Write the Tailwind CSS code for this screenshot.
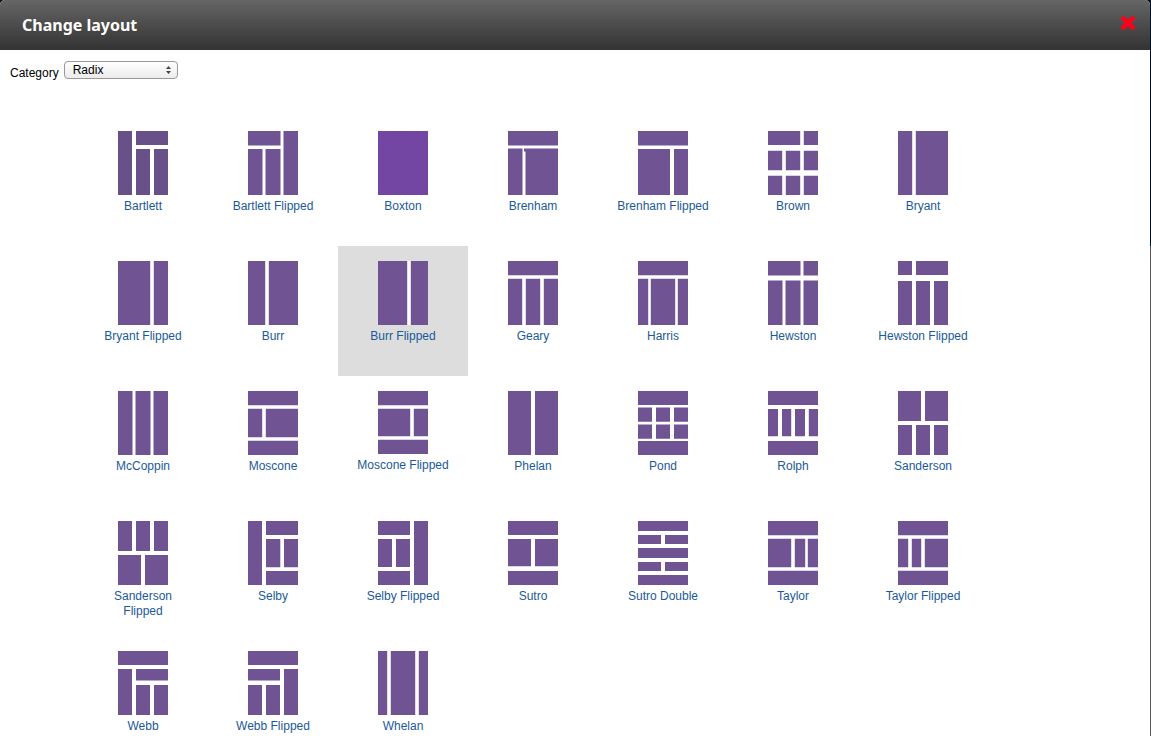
<!DOCTYPE html>
<html lang="en">
<head>
  <meta charset="UTF-8" />
  <meta name="viewport" content="width=device-width, initial-scale=1.0" />
  <title>Change layout</title>
  <script src="https://cdn.jsdelivr.net/npm/@tailwindcss/browser@4"></script>
</head>
<body class="min-h-screen pr-px font-['Liberation_Sans',Arial,sans-serif] text-xs text-black bg-linear-to-b from-[#001026] from-[246px] to-[#555] to-[246px]">
  <main class="min-h-screen rounded-t-[5px] bg-white overflow-hidden">
    <header class="flex items-center justify-between h-[50px] pl-[22px] pr-[14px] bg-linear-to-b from-[#666] to-[#333]">
      <h1 class="font-['Noto_Sans','Open_Sans',sans-serif] text-base leading-5 font-bold text-white">Change layout</h1>
      <button type="button" aria-label="Close" class="pb-1 cursor-pointer">
        <svg class="block w-4 h-4" viewBox="0 0 16 16" fill="#ff0018"><path d="M3.6.4 8 4.8 12.4.4 15.6 3.5 11.2 8l4.4 4.2-3.2 3.2L8 11.1l-4.4 4.3-3.2-3.2L4.8 8 .4 3.5Z"/></svg>
      </button>
    </header>
    <form class="flex items-start gap-[5px] px-[10px] pt-[11px]">
      <label for="category" class="pt-1">Category</label>
      <div class="relative">
        <select id="category" class="block appearance-none w-[114px] h-[18px] pl-2 pr-4 rounded-[4px] border border-[#999] bg-linear-to-b from-white to-[#ececec] text-xs leading-4">
          <option>Radix</option>
        </select>
        <svg class="absolute right-[7px] top-[5px] w-[5px] h-2 pointer-events-none" viewBox="0 0 5 8" fill="#444"><path d="M2.5 0 5 3H0ZM2.5 8 0 5h5Z"/></svg>
      </div>
    </form>
    <div id="layouts" class="flex flex-wrap px-[78px] pt-[35px]"></div>
  </main>
<script>
  // Each region of a layout is [left, top, right, bottom] on a 50 x 64 page.
  const layouts = [
    { name: 'Bartlett', color: '#685088', regions: [[0,0,14,64],[18,0,50,14],[18,18,32,64],[36,18,50,64]] },
    { name: 'Bartlett Flipped', regions: [[0,0,32.5,14.5],[0,18,14.5,64],[17.5,18,32.5,64],[35.5,0,50,64]] },
    { name: 'Boxton', color: '#7446a4', regions: [[0,0,50,64]] },
    { name: 'Brenham', regions: [[0,0,50,14.5],[0,17.5,14.5,64],[17.5,17.5,50,64],[16,17.5,18,20.5]] },
    { name: 'Brenham Flipped', regions: [[0,0,50,14.5],[0,18,32,64],[36,18,50,64]] },
    { name: 'Brown', regions: [[0,0,32.2,14],[35.8,0,50,14],[0,19.8,14.2,39.2],[17.8,19.8,32.2,39.2],[35.8,19.8,50,39.2],[0,44.8,14.2,64],[17.8,44.8,32.2,64],[35.8,44.8,50,64]] },
    { name: 'Bryant', regions: [[0,0,14.2,64],[17.8,0,50,64]] },
    { name: 'Bryant Flipped', regions: [[0,0,32.2,64],[35.8,0,50,64]] },
    { name: 'Burr', regions: [[0,0,17.2,64],[20.8,0,50,64]] },
    { name: 'Burr Flipped', selected: true, regions: [[0,0,29.2,64],[32.8,0,50,64]] },
    { name: 'Geary', regions: [[0,0,50,14.2],[0,17.8,14.2,64],[17.8,17.8,32.2,64],[35.8,17.8,50,64]] },
    { name: 'Harris', regions: [[0,0,50,14.2],[0,17.8,10.2,64],[12.8,17.8,37.2,64],[39.8,17.8,50,64]] },
    { name: 'Hewston', regions: [[0,0,32.5,14.5],[35.5,0,50,14.5],[0,19.5,14.5,64],[17.5,19.5,32.5,64],[35.5,19.5,50,64]] },
    { name: 'Hewston Flipped', regions: [[0,0,14,14],[18,0,50,14],[0,20,14,64],[18,20,32,64],[36,20,50,64]] },
    { name: 'McCoppin', regions: [[0,0,14.5,64],[17.5,0,32.5,64],[35.5,0,50,64]] },
    { name: 'Moscone', regions: [[0,0,50,14.2],[0,17.8,14.2,46.2],[17.8,17.8,50,46.2],[0,49.8,50,64]] },
    { name: 'Moscone Flipped', short: true, regions: [[0,0,50,14.2],[0,17.8,32.2,45.2],[35.8,17.8,50,45.2],[0,48.8,50,63]] },
    { name: 'Phelan', regions: [[0,0,23,64],[27,0,50,64]] },
    { name: 'Pond', regions: [[0,0,50,14],[0,16.5,14,30.8],[18,16.5,32,30.8],[36,16.5,50,30.8],[0,33.4,14,47.7],[18,33.4,32,47.7],[36,33.4,50,47.7],[0,50,50,64]] },
    { name: 'Rolph', regions: [[0,0,50,14],[0,18,10,45.3],[14,18,23.2,45.3],[27,18,37,45.3],[40.8,18,50,45.3],[0,50,50,64]] },
    { name: 'Sanderson', regions: [[0,0,23,30],[27,0,50,30],[0,34,14,64],[18,34,32,64],[36,34,50,64]] },
    { name: 'Sanderson Flipped', regions: [[0,0,14,30],[18,0,32,30],[36,0,50,30],[0,34,23,64],[27,34,50,64]] },
    { name: 'Selby', regions: [[0,0,14,64],[18,0,50,14],[18,18,32.3,46.2],[36,18,50,46.2],[18,50,50,64]] },
    { name: 'Selby Flipped', regions: [[0,0,32,14],[0,18,14,46],[18,18,32,46],[0,50,32,64],[36,0,50,64]] },
    { name: 'Sutro', regions: [[0,0,50,14],[0,18,23,45.3],[27,18,50,45.3],[0,50,50,64]] },
    { name: 'Sutro Double', regions: [[0,0,50,10],[0,14,23,23],[27,14,50,23],[0,27,50,37],[0,41,23,50],[27,41,50,50],[0,54,50,64]] },
    { name: 'Taylor', regions: [[0,0,50,14.2],[0,17.8,23.2,46.2],[26.8,17.8,37.2,46.2],[39.8,17.8,50,46.2],[0,49.8,50,64]] },
    { name: 'Taylor Flipped', regions: [[0,0,50,14.2],[0,17.8,10.2,46.2],[13.8,17.8,23.2,46.2],[26.8,17.8,50,46.2],[0,49.8,50,64]] },
    { name: 'Webb', regions: [[0,0,50,14],[0,18,14,64],[18,18,50,29.5],[18,34,32,64],[36,34,50,64]] },
    { name: 'Webb Flipped', regions: [[0,0,50,14],[0,18,32,29.5],[0,34,14,64],[18,34,32,64],[36,18,50,64]] },
    { name: 'Whelan', regions: [[0,0,9.2,64],[12.8,0,37.2,64],[40.8,0,50,64]] }
  ];
  const container = document.getElementById('layouts');
  layouts.forEach(layout => {
    const path = layout.regions.map(([l, t, r, b]) => `M${l} ${t}H${r}V${b}H${l}Z`).join('');
    const height = layout.short ? 63 : 64;
    const link = document.createElement('a');
    link.href = '#';
    link.className = 'flex flex-col items-center w-[130px] h-[130px] px-[15px] pt-[15px] text-center text-xs leading-[15px] text-[#1b5a98] hover:bg-[#ddd]';
    if (layout.selected) link.classList.add('bg-[#ddd]');
    link.innerHTML = `
      <svg class="block shrink-0 mb-1 bg-white" width="50" height="${height}" viewBox="0 0 50 ${height}" fill="${layout.color || '#705393'}"><path d="${path}"/></svg>
      <span>${layout.name}</span>`;
    container.appendChild(link);
  });
</script>
</body>
</html>
